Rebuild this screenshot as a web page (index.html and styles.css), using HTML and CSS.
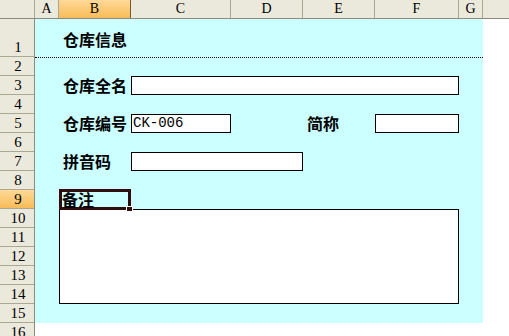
FILE: index.html
```html
<!DOCTYPE html>
<html lang="zh-CN">
<head>
  <meta charset="UTF-8" />
  <title>仓库信息</title>
  <link rel="stylesheet" href="styles.css">
</head>
<body>

  <div class="colbar">
    <div class="corner"></div>
    <div class="w24">A</div>
    <div class="w72 sel">B</div>
    <div class="w100">C</div>
    <div class="w72">D</div>
    <div class="w72">E</div>
    <div class="w84">F</div>
    <div class="w24">G</div>
    <div class="rest"></div>
  </div>

  <div class="body">
    <div class="rowbar">
      <div class="rowhead tall">1</div>
      <div class="rowhead">2</div>
      <div class="rowhead">3</div>
      <div class="rowhead">4</div>
      <div class="rowhead">5</div>
      <div class="rowhead">6</div>
      <div class="rowhead">7</div>
      <div class="rowhead">8</div>
      <div class="rowhead sel">9</div>
      <div class="rowhead">10</div>
      <div class="rowhead">11</div>
      <div class="rowhead">12</div>
      <div class="rowhead">13</div>
      <div class="rowhead">14</div>
      <div class="rowhead">15</div>
      <div class="rowhead">16</div>
    </div>

    <div class="cells">
      <div class="title">仓库信息</div>
      <div class="rule"></div>

      <div class="lbl lbl-name">仓库全名</div>
      <div class="box box-name"></div>

      <div class="lbl lbl-code">仓库编号</div>
      <div class="box box-code">CK-006</div>
      <div class="lbl lbl-short">简称</div>
      <div class="box box-short"></div>

      <div class="lbl lbl-py">拼音码</div>
      <div class="box box-py"></div>

      <div class="lbl note">备注<span class="handle"></span></div>
      <div class="box memo"></div>
    </div>
  </div>

</body>
</html>
```

FILE: styles.css
```css
html, body {
  margin: 0;
  overflow: hidden;
  background: #fff;
}
body {
  font-family: "Liberation Serif", serif;
  color: #000;
}

/* column letters */
.colbar {
  display: flex;
  height: 19px;
  box-sizing: border-box;
  background: #ebe9dc;
  border-bottom: 1px solid #8e8b7b;
}
.colbar div {
  box-sizing: border-box;
  flex: none;
  border-right: 1px solid #aaa793;
  display: flex;
  align-items: center;
  justify-content: center;
  font-size: 14px;
  line-height: 16px;
}
.corner { width: 35px; }
.w24 { width: 24px; }
.w72 { width: 72px; }
.w84 { width: 84px; }
.w100 { width: 100px; }
.colbar .rest { flex: 1; border-right: none; }
.colbar .sel {
  background: linear-gradient(#ffd997, #f8bc58);
  border-right-color: #7a5a2a;
}

.body {
  display: flex;
  align-items: flex-start;
}

/* row numbers */
.rowbar {
  width: 35px;
  flex: none;
  box-sizing: border-box;
  background: #ebe9dc;
  border-right: 1px solid #8e8b7b;
}
.rowhead {
  height: 19px;
  box-sizing: border-box;
  border-bottom: 1px solid #aaa793;
  display: flex;
  align-items: flex-end;
  justify-content: center;
  padding-left: 2px;
  font-size: 15px;
  line-height: 17px;
}
.rowhead.tall { height: 38px; }
.rowhead.sel { background: linear-gradient(#ffd997, #f8bc58); }

/* sheet area */
.cells {
  display: grid;
  grid-template-columns: 24px 72px 100px 72px 72px 84px 24px;
  grid-template-rows: 38px repeat(14, 19px);
  background: #ccffff;
}
.title {
  grid-row: 1;
  grid-column: 2 / 5;
  align-self: start;
  margin-top: 11px;
  padding-left: 4px;
  font-family: "Noto Sans CJK SC", sans-serif;
  font-weight: bold;
  font-size: 16px;
  line-height: 19px;
}
.rule {
  grid-row: 2;
  grid-column: 1 / -1;
  align-self: start;
  border-top: 1px dotted #000;
}
.lbl {
  padding-left: 4px;
  font-family: "Noto Sans CJK SC", sans-serif;
  font-weight: bold;
  font-size: 16px;
  line-height: 19px;
  white-space: nowrap;
}
.box {
  background: #fff;
  border: 1px solid #000;
}
.lbl-name { grid-row: 3; grid-column: 2; }
.box-name { grid-row: 3; grid-column: 3 / 7; }
.lbl-code { grid-row: 5; grid-column: 2; }
.box-code {
  grid-row: 5;
  grid-column: 3;
  padding-left: 1px;
  font-family: "Liberation Mono", monospace;
  font-size: 14px;
  line-height: 17px;
}
.lbl-short { grid-row: 5; grid-column: 5; }
.box-short { grid-row: 5; grid-column: 6; }
.lbl-py { grid-row: 7; grid-column: 2; }
.box-py { grid-row: 7; grid-column: 3 / 5; }

.note {
  grid-row: 9;
  grid-column: 2;
  position: relative;
  margin: -1px 0;
  padding-left: 0;
  border: 3px solid #300c0c;
  line-height: 15px;
}
.handle {
  position: absolute;
  right: -5px;
  bottom: -5px;
  width: 5px;
  height: 4px;
  background: #300c0c;
  border: 1px solid #fff;
}
.memo { grid-row: 10 / 15; grid-column: 2 / 7; }
```
